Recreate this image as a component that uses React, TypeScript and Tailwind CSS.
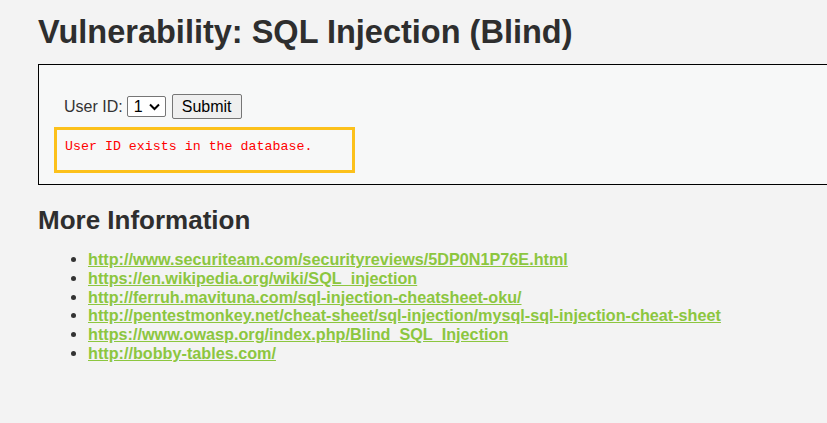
import React from "react";

const links = [
  "http://www.securiteam.com/securityreviews/5DP0N1P76E.html",
  "https://en.wikipedia.org/wiki/SQL_injection",
  "http://ferruh.mavituna.com/sql-injection-cheatsheet-oku/",
  "http://pentestmonkey.net/cheat-sheet/sql-injection/mysql-sql-injection-cheat-sheet",
  "https://www.owasp.org/index.php/Blind_SQL_Injection",
  "http://bobby-tables.com/",
];

export default function App() {
  return (
    <div
      className="w-[827px] h-[423px] overflow-hidden bg-[#f3f3f3] text-[#2b2b2b] pl-[38px] pt-[12px]"
      style={{ fontFamily: '"Liberation Sans", Arial, sans-serif' }}
    >
      <h1 className="text-[32.5px] font-bold leading-[40px] text-[#2e2e2e] whitespace-nowrap">
        Vulnerability: SQL Injection (Blind)
      </h1>
      <div className="mt-[12px] w-[800px] h-[121px] border border-black bg-[#f7f8f8] pt-[29px] pl-[15px]">
        <div className="flex items-center h-[25px] text-[16px] text-[#333]">
          <span className="ml-[10px]">User ID:</span>
          <div className="ml-[4px] w-[39px] h-[21px] border border-[#767676] rounded-[2px] bg-white flex items-center pl-[6px] gap-[6px]">
            <span className="text-[16px] leading-none text-black">1</span>
            <svg width="11" height="8" viewBox="0 0 11 8">
              <path d="M1 1.5 L5.5 6 L10 1.5" stroke="#000" strokeWidth="2" fill="none" />
            </svg>
          </div>
          <div className="ml-[6px] w-[70px] h-[25px] border border-[#767676] rounded-[2px] bg-[#efefef] flex items-center justify-center text-[16px] text-black">
            Submit
          </div>
        </div>
        <div className="mt-[8px] w-[301px] h-[46px] border-[3px] border-[#fcc11b] pl-[8px] pt-[3px]">
          <span
            className="text-[13.3px] leading-[20px] text-[#ff0000] whitespace-nowrap"
            style={{ fontFamily: '"Liberation Mono", "Courier New", monospace' }}
          >
            User ID exists in the database.
          </span>
        </div>
      </div>
      <h2 className="mt-[19px] text-[26px] font-bold leading-[32px] text-[#2e2e2e]">More Information</h2>
      <ul className="mt-[14px] ml-[50px] list-disc text-[16.2px] leading-[18.8px] font-bold">
        {links.map((l) => (
          <li key={l} className="text-black marker:text-[#333]">
            <a href="#" className="text-[#8cc63f] underline">
              {l}
            </a>
          </li>
        ))}
      </ul>
    </div>
  );
}
